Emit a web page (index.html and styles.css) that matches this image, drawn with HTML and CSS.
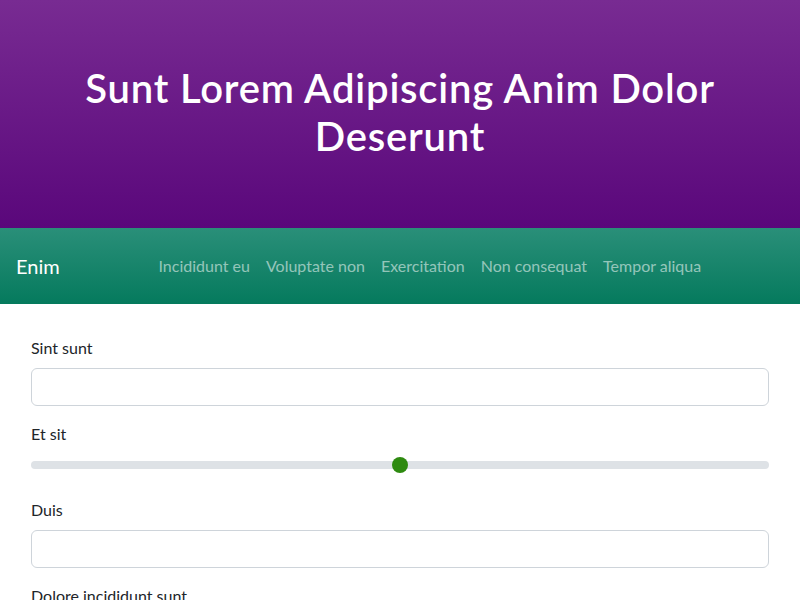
FILE: index.html
```html
<!DOCTYPE html>
<html lang="en">
<head>
<meta charset="utf-8">
<title>Sunt Lorem</title>
<link rel="stylesheet" href="styles.css">
</head>
<body>
<header class="hero">
  <h1 class="hero-title">Sunt Lorem Adipiscing Anim Dolor Deserunt</h1>
</header>
<nav class="navbar">
  <a class="brand" href="#">Enim</a>
  <ul class="nav-links">
    <li><a href="#">Incididunt eu</a></li>
    <li><a href="#">Voluptate non</a></li>
    <li><a href="#">Exercitation</a></li>
    <li><a href="#">Non consequat</a></li>
    <li><a href="#">Tempor aliqua</a></li>
  </ul>
</nav>
<main class="content">
  <form class="form">
    <div class="field">
      <label class="label" for="f1">Sint sunt</label>
      <input class="control" id="f1" type="text">
    </div>
    <div class="field field-range">
      <label class="label" for="f2">Et sit</label>
      <input class="range" id="f2" type="range" min="0" max="100" value="50">
    </div>
    <div class="field">
      <label class="label" for="f3">Duis</label>
      <input class="control" id="f3" type="text">
    </div>
    <div class="field">
      <label class="label" for="f4">Dolore incididunt sunt</label>
      <input class="control" id="f4" type="text">
    </div>
  </form>
</main>
</body>
</html>
```

FILE: styles.css
```css
* { box-sizing: border-box; }
html, body { margin: 0; padding: 0; }
body {
  font-family: "Segoe UI", Lato, "Noto Sans", sans-serif;
  font-size: 16px;
  line-height: 1.5;
  color: #212529;
  background: #fff;
}
.hero {
  background: linear-gradient(180deg, #782b92 0%, #5a077b 100%);
  padding: 64px 16px 68px;
  text-align: center;
}
.hero-title {
  margin: 0;
  color: #fff;
  font-size: 40px;
  font-weight: 600;
  line-height: 48px;
  letter-spacing: 0.8px;
  padding: 0 60px;
}
.navbar {
  height: 76px;
  display: flex;
  align-items: center;
  padding: 0 16px;
  background: linear-gradient(180deg, #2a8f79 0%, #057a5d 100%);
}
.brand {
  color: #fff;
  font-size: 20px;
  text-decoration: none;
  margin-right: 16px;
  line-height: 30px;
}
.nav-links {
  list-style: none;
  margin: 0 auto;
  padding: 0;
  display: flex;
}
.nav-links a {
  display: block;
  padding: 8px;
  color: rgba(255, 255, 255, 0.55);
  text-decoration: none;
}
.content {
  padding: 32px 31px 0;
}
.field { margin-bottom: 16px; }
.field-range { margin-bottom: 22px; }
.label {
  display: block;
  margin-bottom: 8px;
}
.control {
  display: block;
  width: 100%;
  height: 38px;
  padding: 6px 12px;
  font: inherit;
  border: 1px solid #ced4da;
  border-radius: 6px;
  background: #fff;
}
.range {
  -webkit-appearance: none;
  appearance: none;
  display: block;
  width: 100%;
  height: 22px;
  margin: 0;
  padding: 0;
  background: transparent;
}
.range::-webkit-slider-runnable-track {
  height: 8px;
  border-radius: 8px;
  background: #dee2e6;
}
.range::-webkit-slider-thumb {
  -webkit-appearance: none;
  appearance: none;
  width: 16px;
  height: 16px;
  margin-top: -4px;
  border-radius: 50%;
  border: 0;
  background: #2e8a10;
}
```
